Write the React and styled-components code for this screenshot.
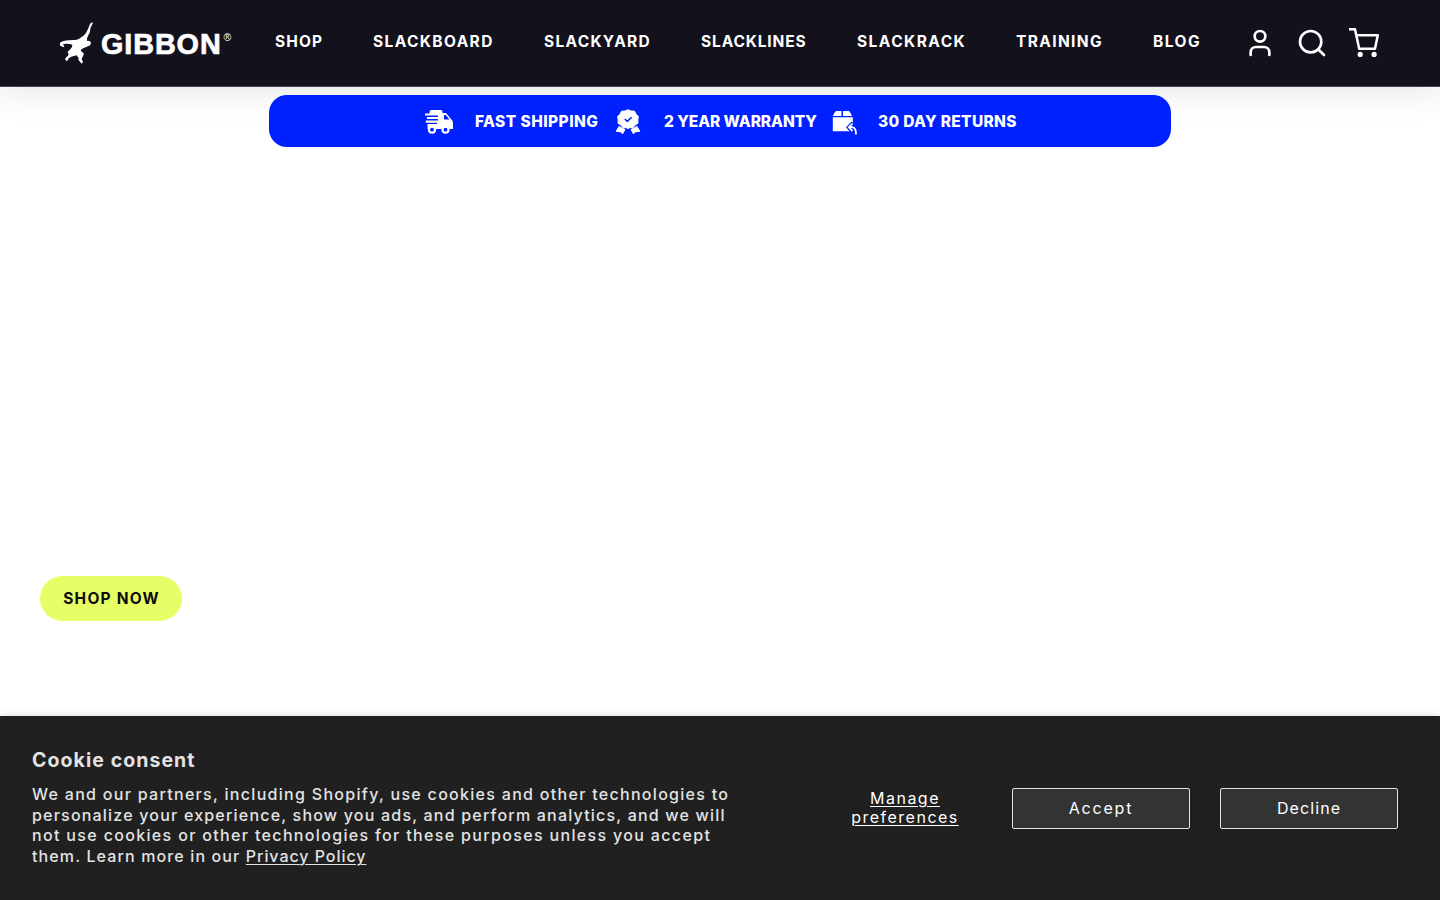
import React from "react";
import styled, { createGlobalStyle } from "styled-components";
import { Search, User } from "lucide-react";

const GlobalStyle = createGlobalStyle`
  *, *::before, *::after { box-sizing: border-box; }
  html, body { margin: 0; background: #fff; }
  body { font-family: Inter, "Open Sans", sans-serif; overflow: hidden; }
  button { font-family: inherit; margin: 0; cursor: pointer; }
  a { color: inherit; text-decoration: none; }
`;

const Page = styled.div`
  display: flex;
  flex-direction: column;
  height: 900px;
`;

const Header = styled.header`
  display: flex;
  align-items: center;
  flex: none;
  height: 87px;
  padding: 0 60px 0 56px;
  background: #13111c;
  border-bottom: 1px solid #47454e;
  box-shadow: 0 4px 36px rgba(0, 0, 0, 0.11);
  color: #fff;
`;

const Logo = styled.a`
  display: flex;
  align-items: center;
  width: 219px;
  height: 50px;
`;

const Wordmark = styled.span`
  margin-left: -1px;
  padding-top: 2px;
  font: 700 28.8px/32px "Liberation Sans", Arial, sans-serif;
  letter-spacing: 0.9px;
  -webkit-text-stroke: 0.7px #fff;
`;

const Registered = styled.span`
  margin: -13px 0 0 2px;
  font: 400 10.5px/12px "Liberation Sans", Arial, sans-serif;
`;

const Nav = styled.nav`
  display: grid;
  grid-template-columns: 48px 121px 107px 106px 109px 87px 48px;
  column-gap: 50px;
  padding-bottom: 3px;
`;

const NavLink = styled.a`
  font-size: 15.5px;
  font-weight: 700;
  line-height: 24px;
  letter-spacing: ${(p) => p.$tracking}px;
  white-space: nowrap;
`;

const HeaderIcons = styled.div`
  display: flex;
  gap: 20px;
  margin-left: auto;
  svg { display: block; }
`;

const Strip = styled.section`
  display: flex;
  align-items: center;
  flex: none;
  width: 902px;
  height: 52px;
  margin: 8px auto 0;
  padding: 1px 0 0 155px;
  border-radius: 18px;
  background: #0021ff;
  color: #fff;
  position: relative;
`;

const Benefit = styled.div`
  display: flex;
  align-items: center;
  gap: ${(p) => p.$gap}px;
  width: ${(p) => p.$width}px;
  svg { display: block; flex: none; }
`;

const BenefitText = styled.span`
  font-size: 15.5px;
  font-weight: 800;
  line-height: 24px;
  letter-spacing: ${(p) => p.$tracking}px;
  white-space: nowrap;
`;

const Hero = styled.main`
  display: flex;
  align-items: flex-end;
  flex: 1;
  padding: 0 40px 95px;
`;

const ShopButton = styled.button`
  width: 142px;
  height: 45px;
  padding: 0 0 0 1px;
  border: 0;
  border-radius: 23px;
  background: #e7ff66;
  color: #0d0d0d;
  font-size: 15.5px;
  font-weight: 700;
  letter-spacing: 1.2px;
  white-space: nowrap;
`;

const CookieBanner = styled.section`
  display: flex;
  justify-content: space-between;
  align-items: flex-start;
  flex: none;
  height: 184px;
  padding: 32px 42px 0 32px;
  background: #202020;
  color: #e3e3e3;
  box-shadow: 0 0 8px rgba(0, 0, 0, 0.16);
`;

const CookieTitle = styled.h2`
  margin: 0 0 12px;
  font-size: 19.5px;
  font-weight: 700;
  line-height: 24px;
  letter-spacing: 1.07px;
`;

const CookieText = styled.p`
  margin: 0;
  font-size: 16px;
  font-weight: 500;
  line-height: 20.7px;
`;

const TextLine = styled.span`
  display: block;
  letter-spacing: ${(p) => p.$tracking}px;
  white-space: pre;
`;

const PolicyLink = styled.a`
  letter-spacing: 0.95px;
  text-decoration: underline;
  text-decoration-thickness: 1px;
  text-underline-offset: 2px;
`;

const Actions = styled.div`
  display: flex;
  align-items: center;
  gap: 30px;
  margin-top: 40px;
`;

const ActionButton = styled.button`
  width: 178px;
  height: 41px;
  padding: 0 0 2px;
  border: 1px solid #e3e3e3;
  border-radius: 2px;
  background: #333;
  color: #fff;
  font-size: 16px;
  letter-spacing: ${(p) => p.$tracking}px;
`;

const ManageButton = styled.button`
  width: 154px;
  padding: 0 20px 2px;
  border: 0;
  background: none;
  color: #fff;
  font-size: 16px;
  line-height: 19px;
  letter-spacing: 1.5px;
  text-decoration: underline;
  text-decoration-thickness: 1px;
  text-underline-offset: 2px;
`;

const navItems = [
  { label: "SHOP", tracking: 1.1 },
  { label: "SLACKBOARD", tracking: 1.38 },
  { label: "SLACKYARD", tracking: 1.28 },
  { label: "SLACKLINES", tracking: 0.86 },
  { label: "SLACKRACK", tracking: 1.45 },
  { label: "TRAINING", tracking: 1.37 },
  { label: "BLOG", tracking: 1.5 },
];

const cookieLines = [
  { text: "We and our partners, including Shopify, use cookies and other technologies to", tracking: 1.295 },
  { text: "personalize your experience, show you ads, and perform analytics, and we will", tracking: 1.2 },
  { text: "not use cookies or other technologies for these purposes unless you accept", tracking: 1.34 },
];

function GibbonMark() {
  return (
    <svg width="46" height="50" viewBox="0 0 138 150" fill="#fff" aria-hidden="true">
      <path d="M111 14 Q105 12 102 18 L96 33 Q91 47 81 55 Q76 57 72 61 Q65 66 57 66 Q28 65 14 73 Q9 77 13 83 L23 88 L25 84 L20 79 Q31 75 49 80 Q50 87 43 94 L35 101 L38 111 L28 121 L28 125 L33 130 Q37 120 44 117 L61 112 L68 119 L67 125 L77 137 L81 133 L77 123 L84 107 L74 98 Q76 92 89 88 Q94 85 98 84 Q107 79 104 71 Q99 67 93 69 Q92 59 97 52 Q104 42 103 31 Z" />
    </svg>
  );
}

function CartIcon() {
  return (
    <svg width="32" height="32" viewBox="0 0 32 32" fill="none" stroke="#fff" strokeWidth="2.5" strokeLinejoin="round">
      <path d="M1 2.2H7L11.2 21.7H27L29.8 8.3H8.4" />
      <circle cx="12.2" cy="27.4" r="2.6" fill="#fff" stroke="none" />
      <circle cx="26.1" cy="27.4" r="2.6" fill="#fff" stroke="none" />
    </svg>
  );
}

function TruckIcon() {
  return (
    <svg width="30" height="26" viewBox="0 0 30 26" fill="#fff">
      <path d="M7 1H17Q18.5 1 18.5 3V4H22L27 10Q29 11.5 29 14V20H25.5A4.2 4.2 0 0 0 17.5 20H12A4.2 4.2 0 0 0 4 20H3.5V15H13V13.7H1.8V11.5H14V10H3V8H14V6.5H1V4.5H5.5Q5.5 1 7 1Z" />
      <path d="M20 6H21.8L25.5 10.5H20Z" fill="#0021ff" />
      <circle cx="8" cy="20.7" r="3" fill="none" stroke="#fff" strokeWidth="2.2" />
      <circle cx="21.5" cy="20.7" r="3" fill="none" stroke="#fff" strokeWidth="2.2" />
    </svg>
  );
}

function BadgeIcon() {
  return (
    <svg width="26" height="26" viewBox="0 0 26 26" fill="#fff" stroke="#fff" strokeWidth="1" strokeLinejoin="round">
      <path d="M4 17.5L10 20.5L7.5 24.8L5.5 22.8L1.2 22.3ZM22 17.5L16 20.5L18.5 24.8L20.5 22.8L24.8 22.3Z" />
      <path d="M13 .7L16 2L19.5 2.2L21 5.2L23.3 7.5L22.8 11L23 14.3L20 16L18 18.7L14.8 18.6L13 19.6L11 18.6L8 18.7L6 16L3 14.3L3.2 11L2.7 7.5L5 5.2L6.5 2.2L10 2Z" />
      <path d="M9.8 10L12.3 12.4L16.6 8.2" fill="none" stroke="#0021ff" strokeWidth="1.5" />
    </svg>
  );
}

function ReturnBoxIcon() {
  return (
    <svg width="27" height="28" viewBox="0 0 27 28" fill="#fff">
      <path d="M5 3H10.5V8H2Q2.5 5 5 3ZM12 3H18Q20 5 21 8H12Z" />
      <path d="M1.8 9.3H21.8V14L16 19L19.5 23.3H1.8Z" />
      <path d="M21.5 15.5L17.5 19.2L21.5 23M18 19.2H21Q25.2 19.5 25 26.5" fill="none" stroke="#fff" strokeWidth="1.8" />
      <path d="M21 14L15.8 19.2L19.8 23.8" fill="none" stroke="#0021ff" strokeWidth="1.1" />
    </svg>
  );
}

export default function App() {
  return (
    <Page>
      <GlobalStyle />
      <Header>
        <Logo href="#" aria-label="Gibbon">
          <GibbonMark />
          <Wordmark>GIBBON</Wordmark>
          <Registered>®</Registered>
        </Logo>
        <Nav>
          {navItems.map((item) => (
            <NavLink key={item.label} href="#" $tracking={item.tracking}>{item.label}</NavLink>
          ))}
        </Nav>
        <HeaderIcons>
          <User size={32} strokeWidth={2} />
          <Search size={32} strokeWidth={2} />
          <CartIcon />
        </HeaderIcons>
      </Header>
      <Strip>
        <Benefit $gap={21} $width={191}>
          <TruckIcon />
          <BenefitText $tracking={0.43}>FAST SHIPPING</BenefitText>
        </Benefit>
        <Benefit $gap={23} $width={216}>
          <BadgeIcon />
          <BenefitText $tracking={-0.05}>2 YEAR WARRANTY</BenefitText>
        </Benefit>
        <Benefit $gap={20} $width={190}>
          <ReturnBoxIcon />
          <BenefitText $tracking={0.32}>30 DAY RETURNS</BenefitText>
        </Benefit>
      </Strip>
      <Hero>
        <ShopButton>SHOP NOW</ShopButton>
      </Hero>
      <CookieBanner>
        <div>
          <CookieTitle>Cookie consent</CookieTitle>
          <CookieText>
            {cookieLines.map((line) => (
              <TextLine key={line.text} $tracking={line.tracking}>{line.text}</TextLine>
            ))}
            <TextLine $tracking={1.13}>
              {"them. Learn more in our "}
              <PolicyLink href="#">Privacy Policy</PolicyLink>
            </TextLine>
          </CookieText>
        </div>
        <Actions>
          <ManageButton>Manage preferences</ManageButton>
          <ActionButton $tracking={1.8}>Accept</ActionButton>
          <ActionButton $tracking={1.1}>Decline</ActionButton>
        </Actions>
      </CookieBanner>
    </Page>
  );
}
